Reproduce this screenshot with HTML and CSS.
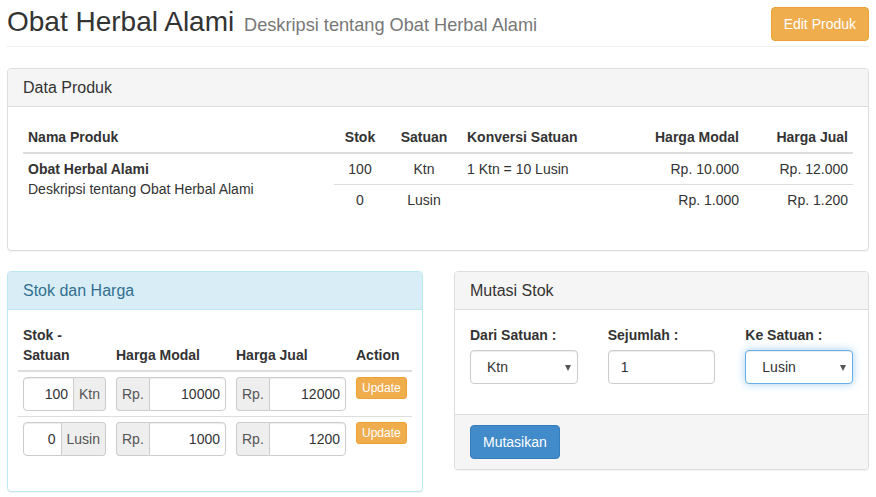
FILE: index.html
```html
<!DOCTYPE html>
<html lang="id">
<head>
<meta charset="utf-8">
<title>Obat Herbal Alami</title>
<link rel="stylesheet" href="styles.css">
</head>
<body>
<div class="container">
  <div class="page-header">
    <h1 class="title">Obat Herbal Alami <small>Deskripsi tentang Obat Herbal Alami</small></h1>
    <button class="btn btn-warning">Edit Produk</button>
  </div>

  <div class="panel panel-default">
    <div class="panel-heading"><h3 class="panel-title">Data Produk</h3></div>
    <div class="panel-body">
      <table class="table table-condensed tbl-produk">
        <colgroup>
          <col class="w311"><col class="w52"><col class="w76"><col class="w170"><col class="w112"><col class="w109">
        </colgroup>
        <thead>
          <tr>
            <th>Nama Produk</th>
            <th class="tc">Stok</th>
            <th class="tc">Satuan</th>
            <th>Konversi Satuan</th>
            <th class="tr">Harga Modal</th>
            <th class="tr">Harga Jual</th>
          </tr>
        </thead>
        <tbody>
          <tr>
            <td rowspan="2"><strong>Obat Herbal Alami</strong><br>Deskripsi tentang Obat Herbal Alami</td>
            <td class="tc">100</td>
            <td class="tc">Ktn</td>
            <td>1 Ktn = 10 Lusin</td>
            <td class="tr">Rp. 10.000</td>
            <td class="tr">Rp. 12.000</td>
          </tr>
          <tr>
            <td class="tc">0</td>
            <td class="tc">Lusin</td>
            <td></td>
            <td class="tr">Rp. 1.000</td>
            <td class="tr">Rp. 1.200</td>
          </tr>
        </tbody>
      </table>
    </div>
  </div>

  <div class="row">
    <div class="panel panel-info">
      <div class="panel-heading"><h3 class="panel-title">Stok dan Harga</h3></div>
      <div class="panel-body body-tight">
        <table class="table table-condensed tbl-stok">
          <colgroup>
            <col class="w93"><col class="w120"><col class="w120"><col class="w61">
          </colgroup>
          <thead>
            <tr>
              <th>Stok -<br>Satuan</th>
              <th>Harga Modal</th>
              <th>Harga Jual</th>
              <th>Action</th>
            </tr>
          </thead>
          <tbody>
            <tr>
              <td><div class="input-group"><input class="form-control tr" value="100"><span class="addon">Ktn</span></div></td>
              <td><div class="input-group"><span class="addon">Rp.</span><input class="form-control tr" value="10000"></div></td>
              <td><div class="input-group"><span class="addon">Rp.</span><input class="form-control tr" value="12000"></div></td>
              <td><button class="btn btn-warning btn-xs">Update</button></td>
            </tr>
            <tr>
              <td><div class="input-group"><input class="form-control tr" value="0"><span class="addon">Lusin</span></div></td>
              <td><div class="input-group"><span class="addon">Rp.</span><input class="form-control tr" value="1000"></div></td>
              <td><div class="input-group"><span class="addon">Rp.</span><input class="form-control tr" value="1200"></div></td>
              <td><button class="btn btn-warning btn-xs">Update</button></td>
            </tr>
          </tbody>
        </table>
      </div>
    </div>

    <div class="panel panel-default">
      <div class="panel-heading"><h3 class="panel-title">Mutasi Stok</h3></div>
      <div class="panel-body">
        <div class="form-row">
          <div class="form-group">
            <label>Dari Satuan :</label>
            <div class="select-wrap">
              <select class="form-control select"><option>Ktn</option><option>Lusin</option></select>
            </div>
          </div>
          <div class="form-group">
            <label>Sejumlah :</label>
            <input class="form-control" value="1">
          </div>
          <div class="form-group">
            <label>Ke Satuan :</label>
            <div class="select-wrap">
              <select class="form-control select focus"><option>Lusin</option><option>Ktn</option></select>
            </div>
          </div>
        </div>
      </div>
      <div class="panel-footer">
        <button class="btn btn-primary">Mutasikan</button>
      </div>
    </div>
  </div>
</div>
</body>
</html>
```
FILE: styles.css
```css
* { box-sizing: border-box; }
html, body { margin: 0; padding: 0; }
body {
  font-family: "Liberation Sans", Arial, Helvetica, sans-serif;
  font-size: 14px;
  line-height: 20px;
  color: #333;
  background: #fff;
}
.container { padding: 0 7px; }

.page-header {
  display: flex;
  justify-content: space-between;
  align-items: flex-start;
  padding: 7px 0 5px;
  border-bottom: 1px solid #eee;
  margin-bottom: 21px;
}
.title {
  margin: 0;
  font-size: 28px;
  font-weight: 400;
  line-height: 1.1;
  color: #333;
}
.title small {
  font-size: 18.2px;
  margin-left: 2px;
  color: #777;
  font-weight: 400;
}

.btn {
  display: inline-block;
  font-family: inherit;
  font-size: 14px;
  line-height: 20px;
  padding: 6px 12px;
  border: 1px solid transparent;
  border-radius: 4px;
  cursor: pointer;
  white-space: nowrap;
}
.btn-warning { background: #f0ad4e; border-color: #eea236; color: #fff; }
.btn-primary { background: #428bca; border-color: #357ebd; color: #fff; }
.btn-xs { font-size: 12px; line-height: 18px; padding: 1px 5px; border-radius: 3px; }

.panel {
  background: #fff;
  border: 1px solid #ddd;
  border-radius: 4px;
  box-shadow: 0 1px 1px rgba(0,0,0,.05);
  margin-bottom: 20px;
}
.panel-heading {
  padding: 10px 15px;
  background: #f5f5f5;
  border-bottom: 1px solid #ddd;
  border-radius: 3px 3px 0 0;
}
.panel-title { margin: 0; font-size: 16px; line-height: 17px; font-weight: 400; color: #333; }
.panel-info { border-color: #bce8f1; }
.panel-info .panel-heading { background: #d9edf7; border-color: #bce8f1; }
.panel-info .panel-title { color: #31708f; }
.panel-body { padding: 15px; }
.body-tight { padding: 10px; }
.panel-footer {
  padding: 10px 15px;
  background: #f5f5f5;
  border-top: 1px solid #ddd;
  border-radius: 0 0 3px 3px;
}

.table {
  width: 100%;
  border-collapse: collapse;
  border-spacing: 0;
  table-layout: fixed;
  margin-bottom: 20px;
}
.table th { font-weight: 700; text-align: left; vertical-align: bottom; border-bottom: 2px solid #ddd; }
.table td { vertical-align: top; border-top: 1px solid #ddd; }
.table-condensed th, .table-condensed td { padding: 5px; line-height: 20px; }
.tc { text-align: center !important; }
.tr { text-align: right !important; }

.w311 { width: 311px; } .w52 { width: 52px; } .w76 { width: 76px; }
.w170 { width: 170px; } .w112 { width: 112px; } .w109 { width: 109px; }
.w93 { width: 93px; } .w120 { width: 120px; } .w61 { width: 61px; }

.row {
  display: grid;
  grid-template-columns: 416px 1fr;
  column-gap: 31px;
  align-items: start;
}

.form-control {
  display: block;
  width: 100%;
  height: 34px;
  padding: 6px 12px;
  font-family: inherit;
  font-size: 14px;
  line-height: 20px;
  color: #555;
  background: #fff;
  border: 1px solid #ccc;
  border-radius: 4px;
  box-shadow: inset 0 1px 1px rgba(0,0,0,.075);
  outline: none;
}
.input-group { display: flex; width: 100%; }
.input-group .form-control {
  flex: 1 1 auto;
  min-width: 0;
  padding: 6px 5px;
  color: #333;
}
.addon {
  flex: 0 0 auto;
  height: 34px;
  padding: 6px 5px;
  font-size: 14px;
  line-height: 20px;
  color: #555;
  background: #eee;
  border: 1px solid #ccc;
}
.input-group .form-control:first-child { border-radius: 4px 0 0 4px; }
.input-group .form-control:last-child { border-radius: 0 4px 4px 0; }
.input-group .addon:first-child { border-radius: 4px 0 0 4px; border-right: 0; }
.input-group .addon:last-child { border-radius: 0 4px 4px 0; border-left: 0; }

.form-row {
  display: grid;
  grid-template-columns: repeat(3, 1fr);
  column-gap: 30px;
}
.form-group { margin-bottom: 15px; }
.form-group label { display: block; font-weight: 700; margin-bottom: 5px; }
.select-wrap { position: relative; }
.select {
  -webkit-appearance: none;
  appearance: none;
  padding: 6px 12px 6px 16px;
  color: #333;
}
.select-wrap::after {
  content: "";
  position: absolute;
  right: 7px;
  top: 15px;
  border-left: 3.5px solid transparent;
  border-right: 3.5px solid transparent;
  border-top: 6px solid #555;
  pointer-events: none;
}
.form-group input.form-control { color: #333; }
.select.focus {
  border-color: #66afe9;
  box-shadow: inset 0 1px 1px rgba(0,0,0,.075), 0 0 8px rgba(102,175,233,.6);
}
```
